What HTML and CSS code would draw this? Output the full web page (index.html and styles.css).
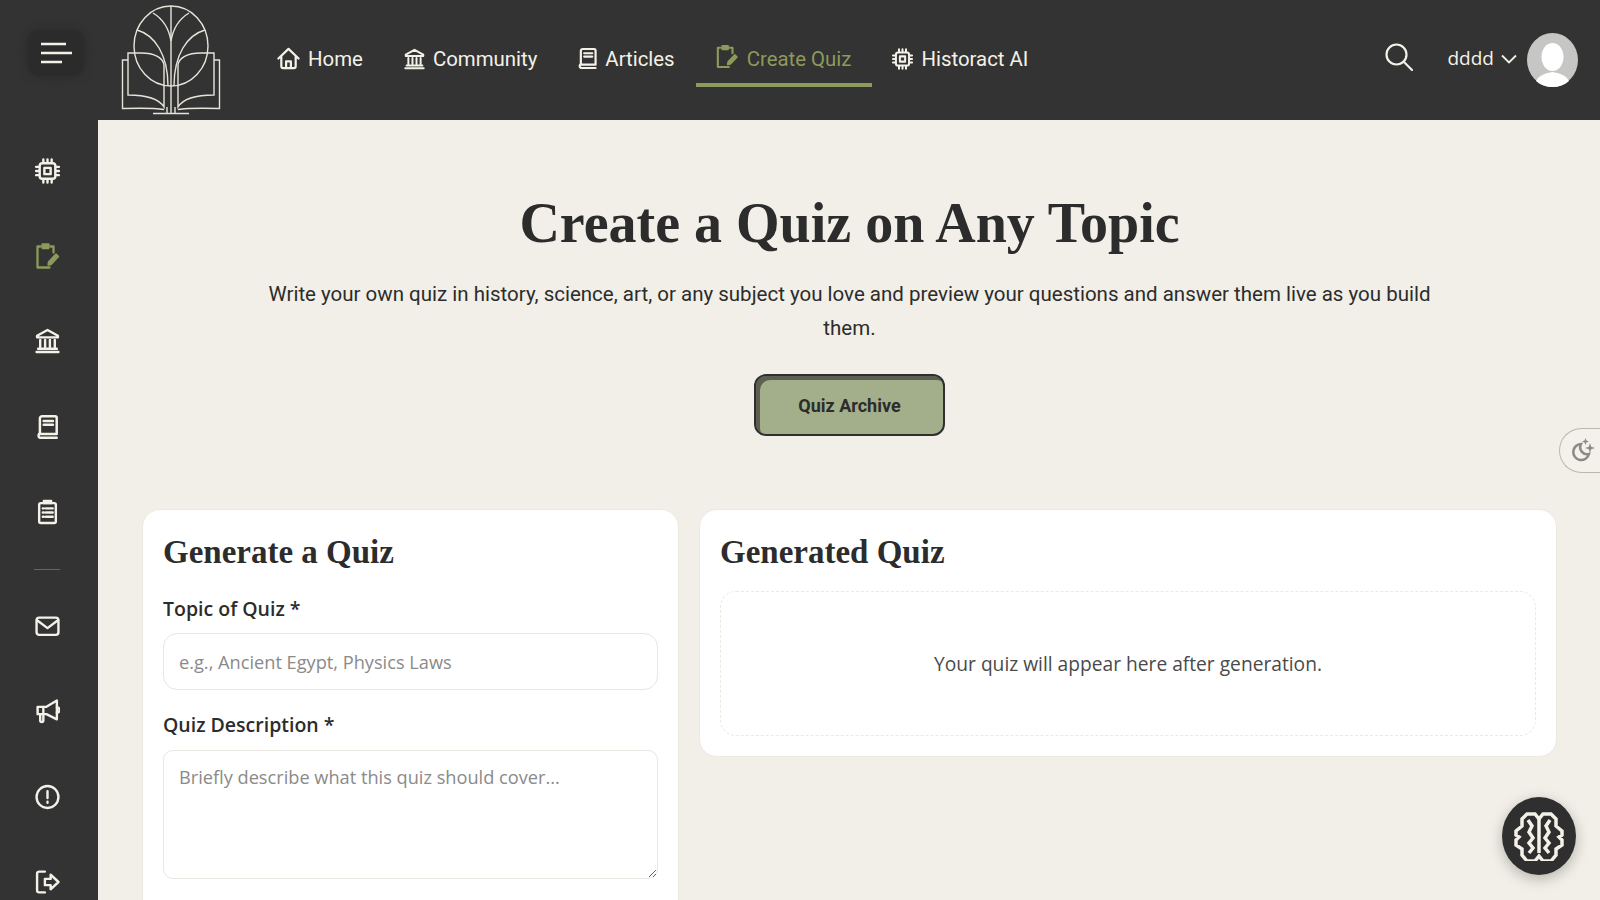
FILE: index.html
```html
<!DOCTYPE html>
<html>
<head>
    <title>Create Quiz</title>
    <link rel="stylesheet" href="styles.css">
</head>
<body>
    <svg class="icon-defs" width="0" height="0">
        <symbol id="i-home" viewBox="0 0.500 24 23">
            <path d="M1.500 12 12 2l10.500 10M4.500 9.500V20a2 2 0 0 0 2 2h11a2 2 0 0 0 2-2V9.500"/>
            <path d="M9.500 22v-7h5v7"/>
        </symbol>
        <symbol id="i-bank" viewBox="0 0 24 24">
            <path d="M12 1.500 22 7v1.500H2V7z"/>
            <path d="M5 11v7M9.700 11v7M14.300 11v7M19 11v7M3 19.500h18M1.500 22.500h21"/>
        </symbol>
        <symbol id="i-book" viewBox="2 0 20 24">
            <path d="M5 18.500V4a2 2 0 0 1 2-2h12a1.500 1.500 0 0 1 1.500 1.500v15z"/>
            <path d="M5 18a2.200 2.200 0 0 0 0 4h15.500"/>
            <path d="M8.500 6.500h8.500M8.500 10h8.500"/>
        </symbol>
        <symbol id="i-quiz" viewBox="0 0 24 26">
            <path d="M5 3.500H2v21h12M15 3.500h3v6"/>
            <path d="M7 1.500h6v3.500H7z" class="solid"/>
            <path d="M13 21.500l.5-2.500 7-7.500 2 2-7 7.500z" class="solid"/>
        </symbol>
        <symbol id="i-cpu" viewBox="0 0 24 24">
            <rect x="4.500" y="4.500" width="15" height="15" rx="2.500"/>
            <rect x="9" y="9" width="6" height="6"/>
            <path d="M8 1v3M12 1v3M16 1v3M8 20v3M12 20v3M16 20v3M1 8h3M1 12h3M1 16h3M20 8h3M20 12h3M20 16h3"/>
        </symbol>
        <symbol id="i-list" viewBox="0 0 24 24">
            <rect x="4" y="3.500" width="16" height="19" rx="1.500"/>
            <path d="M8.500 1.500h7v2h-7z" class="solid"/>
            <path d="M10.500 8.500H17M10.500 12.500H17M10.500 16.500H17M7.500 8.500h1M7.500 12.500h1M7.500 16.500h1"/>
        </symbol>
        <symbol id="i-mail" viewBox="0 0 24 24">
            <rect x="1.500" y="4" width="21" height="16.500" rx="2.500"/>
            <path d="M2 6.500 12 14l10-7.500"/>
        </symbol>
        <symbol id="i-mega" viewBox="0 0 24 24">
            <path d="M21 2v18l-10-5H2.500V8H11z"/>
            <path d="M21 8.500a2.500 2.500 0 0 1 0 5M8 8v7M5 15v6a1.500 1.500 0 0 0 3 0v-6"/>
        </symbol>
        <symbol id="i-alert" viewBox="0 0 24 24">
            <circle cx="12" cy="12" r="10.500"/>
            <path d="M12 6.500v6.500M12 16.500v1"/>
        </symbol>
        <symbol id="i-logout" viewBox="0 0 24 24">
            <path d="M9.500 2H4a2 2 0 0 0-2 2v16a2 2 0 0 0 2 2h5.500"/>
            <path d="M9.500 9h5.500V5l7.500 7-7.500 7v-4H9.500z"/>
        </symbol>
    </svg>

    <div class="app">
        <aside class="sidebar">
            <button class="menu-btn">
                <svg width="32" height="22" viewBox="0 0 32 22"><path d="M1 2h25M1 11h31M1 20h21"/></svg>
            </button>
            <nav class="side-nav">
                <a class="side-item"><svg class="ico"><use href="#i-cpu"/></svg></a>
                <a class="side-item active"><svg class="ico"><use href="#i-quiz"/></svg></a>
                <a class="side-item"><svg class="ico"><use href="#i-bank"/></svg></a>
                <a class="side-item"><svg class="ico"><use href="#i-book"/></svg></a>
                <a class="side-item"><svg class="ico"><use href="#i-list"/></svg></a>
                <div class="side-divider"></div>
                <a class="side-item"><svg class="ico"><use href="#i-mail"/></svg></a>
                <a class="side-item"><svg class="ico"><use href="#i-mega"/></svg></a>
                <a class="side-item"><svg class="ico"><use href="#i-alert"/></svg></a>
                <a class="side-item"><svg class="ico"><use href="#i-logout"/></svg></a>
            </nav>
        </aside>

        <div class="page">
            <header class="topbar">
                <svg class="logo" width="100" height="110" viewBox="0 0 100 110">
                    <ellipse cx="50" cy="41" rx="37" ry="40"/>
                    <path d="M50 1v108"/>
                    <path d="M32 8C42 14 48 24 50 36 52 24 58 14 68 8"/>
                    <path d="M16 25C34 30 47 50 47 81M84 25C66 30 53 50 53 81"/>
                    <path d="M7 48h13c14 0 22 5 23 12v42C38 94 24 90 7 90zM93 48H80c-14 0-22 5-23 12v42c5-8 19-12 36-12z"/>
                    <path d="M7 55H1.500v48.500C18 103 34 103 43 104.500M93 55h5.500v48.500C82 103 66 103 57 104.500"/>
                    <path d="M32 108.500h36M46 102v6M54 102v6"/>
                </svg>
                <nav class="main-nav">
                    <a class="nav-link"><svg class="ico ico-home"><use href="#i-home"/></svg>Home</a>
                    <a class="nav-link"><svg class="ico"><use href="#i-bank"/></svg>Community</a>
                    <a class="nav-link"><svg class="ico ico-book"><use href="#i-book"/></svg>Articles</a>
                    <a class="nav-link active"><svg class="ico ico-tall"><use href="#i-quiz"/></svg>Create Quiz</a>
                    <a class="nav-link"><svg class="ico"><use href="#i-cpu"/></svg>Historact AI</a>
                </nav>
                <div class="top-right">
                    <svg class="search" width="28" height="28" viewBox="0 0 28 28"><circle cx="11.500" cy="11.500" r="10"/><path d="m19 19 8 8"/></svg>
                    <span class="username">dddd</span>
                    <svg class="chevron" width="16" height="10" viewBox="0 0 16 10"><path d="m1 1.500 7 7 7-7"/></svg>
                    <svg class="avatar" viewBox="0 0 51 54">
                        <ellipse class="avatar-bg" cx="25.500" cy="27" rx="25.500" ry="27"/>
                        <ellipse class="avatar-fg" cx="25.500" cy="24" rx="11" ry="14"/>
                        <path class="avatar-fg" d="M9 48c3-6 10-8 16.500-9 6.500 1 13.500 3 16.500 9-4.500 4-10 6-16.500 6S13.500 52 9 48z"/>
                    </svg>
                </div>
            </header>

            <main class="content">
                <section class="hero">
                    <h1>Create a Quiz on Any Topic</h1>
                    <p>Write your own quiz in history, science, art, or any subject you love and preview your questions and answer them live as you build them.</p>
                    <button class="archive-btn">Quiz Archive</button>
                </section>

                <div class="columns">
                    <section class="card card-form">
                        <h2>Generate a Quiz</h2>
                        <label class="field-label">Topic of Quiz *</label>
                        <input class="field-input" type="text" placeholder="e.g., Ancient Egypt, Physics Laws">
                        <label class="field-label">Quiz Description *</label>
                        <textarea class="field-area" placeholder="Briefly describe what this quiz should cover..."></textarea>
                    </section>
                    <section class="card card-result">
                        <h2>Generated Quiz</h2>
                        <div class="empty-box">Your quiz will appear here after generation.</div>
                    </section>
                </div>
            </main>
        </div>
    </div>

    <button class="theme-toggle">
        <svg width="26" height="26" viewBox="0 2 26 26">
            <path class="moon" d="M11 8a8 8 0 1 0 8 10 7 7 0 0 1-8-10z"/>
            <path class="spark" d="M20 7l1.200 3.800L25 12l-3.800 1.200L20 17l-1.200-3.800L15 12l3.800-1.200zM15.500 2l.9 2.600 2.600.9-2.600.9-.9 2.600-.9-2.600-2.600-.9 2.600-.9z"/>
        </svg>
    </button>

    <button class="brain-btn">
        <svg width="50" height="50" viewBox="0 0 50 50">
            <path d="M25 8 21 3h-8L8 8v7L2 20v4l3 2-3 3v5l6 4v6l5 6h8l4-5 4 5h8l5-6v-6l6-4v-5l-3-3 3-2v-4l-6-5V8l-5-5h-8z"/>
            <path d="M25 8v34M14 9l4 6-3 6 4 6-4 5 4 5-4 5M36 9l-4 6 3 6-4 6 4 5-4 5 4 5"/>
        </svg>
    </button>
</body>
</html>
```

FILE: styles.css
```css
* {
    box-sizing: border-box;
}
html, body {
    margin: 0;
    height: 900px;
    overflow: hidden;
}
body {
    font-family: "Roboto", sans-serif;
    background-color: #f1efe7;
    color: #2c2c2c;
}
.icon-defs {
    position: absolute;
}
.ico {
    width: 25px;
    height: 26px;
    flex: none;
    fill: none;
    stroke: currentColor;
    stroke-width: 2.300;
    stroke-linejoin: round;
    stroke-linecap: round;
}
.solid {
    fill: currentColor;
}
.app {
    display: flex;
    height: 900px;
}

/* sidebar */
.sidebar {
    width: 98px;
    flex: none;
    height: 900px;
    background-color: #333333;
    color: #f3f1e8;
    overflow: hidden;
}
.menu-btn {
    display: flex;
    align-items: center;
    justify-content: center;
    width: 56px;
    height: 46px;
    margin: 30px 0 0 28px;
    padding: 0;
    border: none;
    border-radius: 10px;
    background-color: #2b2b2b;
    box-shadow: 0 0 12px rgba(0, 0, 0, 0.2);
}
.menu-btn svg {
    fill: none;
    stroke: #f3f1e8;
    stroke-width: 2.500;
}
.side-nav {
    display: flex;
    flex-direction: column;
    align-items: center;
    width: 94px;
    margin-top: 52px;
}
.side-item {
    display: flex;
    align-items: center;
    justify-content: center;
    height: 85.300px;
    flex: none;
}
.side-item.active {
    color: #8c9a5b;
}
.side-divider {
    width: 26px;
    height: 1px;
    margin: 15px 0 13px;
    background-color: #666666;
    flex: none;
}

/* top bar */
.page {
    flex: 1;
    min-width: 0;
}
.topbar {
    display: flex;
    align-items: center;
    height: 120px;
    padding-left: 23px;
    background-color: #333333;
    color: #f3f1e8;
}
.logo {
    flex: none;
    fill: none;
    stroke: #e6e4da;
    stroke-width: 1.400;
}
.main-nav {
    display: flex;
    align-items: stretch;
    height: 120px;
    margin-left: 36px;
    padding-top: 34px;
    padding-bottom: 33px;
}
.nav-link {
    display: flex;
    align-items: center;
    gap: 8px;
    padding: 0 21px 0 20px;
    font-size: 20.400px;
    border-bottom: 4px solid transparent;
}
.nav-link .ico {
    width: 21px;
    height: 22px;
}
.nav-link .ico-home {
    width: 23px;
    height: 23px;
}
.nav-link .ico-book {
    width: 19px;
    height: 23px;
}
.nav-link.active {
    color: #8c9a5b;
    border-bottom-color: #8c9a5b;
    gap: 9px;
}
.nav-link .ico-tall {
    width: 22px;
    height: 27px;
    margin-top: -5px;
}
.top-right {
    display: flex;
    align-items: center;
    margin-left: auto;
    padding-right: 22px;
}
.search {
    fill: none;
    stroke: #f3f1e8;
    stroke-width: 2.200;
    stroke-linecap: round;
    margin: 0 35px 6px 0;
}
.username {
    margin-bottom: 4px;
    font-family: "Open Sans", sans-serif;
    font-size: 19px;
}
.chevron {
    fill: none;
    stroke: #f3f1e8;
    stroke-width: 1.800;
    margin: 0 10px 2px 7px;
}
.avatar {
    width: 51px;
    height: 54px;
}
.avatar-bg {
    fill: #c6c6c4;
}
.avatar-fg {
    fill: #ffffff;
}

/* main */
.content {
    padding: 0 43px 0 44px;
}
.hero {
    display: flex;
    flex-direction: column;
    align-items: center;
    text-align: center;
}
.hero h1 {
    margin: 73px 0 0;
    font-family: "Liberation Serif", serif;
    font-size: 56px;
    line-height: 60px;
    font-weight: 700;
}
.hero p {
    width: 1170px;
    margin: 24px 0 0;
    font-size: 20.500px;
    line-height: 34px;
    color: #2c2c2c;
}
.archive-btn {
    width: 191px;
    height: 62px;
    margin-top: 29px;
    border: 2px solid #2f2f2f;
    border-radius: 12px;
    background-color: #a3af8b;
    box-shadow: inset 4px 4px 0 #5c5f50;
    color: #2c2c2c;
    font-family: "Roboto", sans-serif;
    font-size: 18px;
    font-weight: 700;
}
.columns {
    display: grid;
    grid-template-columns: 537px 1fr;
    gap: 20px;
    align-items: start;
    margin-top: 73px;
}
.card {
    padding: 22px 20px 20px;
    background-color: #ffffff;
    border: 1px solid #ece9e0;
    border-radius: 18px;
}
.card-form {
    padding-bottom: 80px;
}
.card h2 {
    margin: 0 0 22px;
    font-family: "Liberation Serif", serif;
    font-size: 33px;
    line-height: 40px;
    font-weight: 700;
}
.field-label {
    display: block;
    margin-bottom: 9px;
    font-family: "Open Sans", sans-serif;
    font-size: 19.500px;
    font-weight: 600;
    line-height: 30px;
}
.field-input,
.field-area {
    display: block;
    width: 100%;
    padding: 0 15px;
    border: 1px solid #e8e6df;
    background-color: #ffffff;
    font-family: "Open Sans", sans-serif;
    font-size: 18.200px;
    color: #2c2c2c;
    outline: none;
}
.field-input::placeholder,
.field-area::placeholder {
    color: #8a8a8a;
    opacity: 1;
}
.field-input {
    height: 57px;
    margin-bottom: 20px;
    border-radius: 14px;
}
.field-area {
    height: 129px;
    margin-top: 10px;
    padding-top: 14px;
    border-radius: 10px;
    resize: vertical;
}
.card-result h2 {
    margin-bottom: 19px;
}
.empty-box {
    display: flex;
    align-items: center;
    justify-content: center;
    height: 145px;
    border: 1px dashed #ece9e0;
    border-radius: 16px;
    font-family: "Open Sans", sans-serif;
    font-size: 19.200px;
    color: #4a4a4a;
}

/* floating buttons */
.theme-toggle {
    position: fixed;
    top: 428px;
    right: 0;
    width: 41px;
    height: 45px;
    padding: 0 0 0 10px;
    display: flex;
    align-items: center;
    border: 1px solid #b8b8b0;
    border-right: none;
    border-radius: 23px 0 0 23px;
    background-color: #f3f1ea;
}
.moon {
    fill: none;
    stroke: #8a8a86;
    stroke-width: 2.500;
}
.spark {
    fill: #8a8a86;
}
.brain-btn {
    position: fixed;
    left: 1502px;
    top: 797px;
    width: 74px;
    height: 78px;
    padding: 0;
    display: flex;
    align-items: center;
    justify-content: center;
    border: none;
    border-radius: 50%;
    background-color: #2f2f2f;
    box-shadow: 0 4px 14px rgba(0, 0, 0, 0.25);
}
.brain-btn svg {
    fill: none;
    stroke: #f3f1e8;
    stroke-width: 3.500;
    stroke-linejoin: miter;
}
```
